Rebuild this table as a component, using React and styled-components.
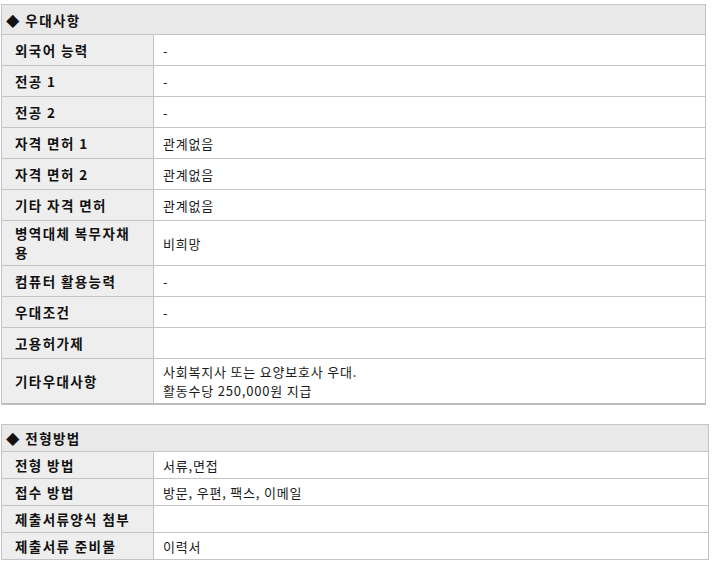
import React from "react";
import styled, { createGlobalStyle } from "styled-components";

const Global = createGlobalStyle`
  html, body { margin: 0; padding: 0; background: #fff; }
  body { font-family: "Noto Sans CJK KR", "Noto Sans", sans-serif; color: #222; }
`;

const Page = styled.div`
  padding: 4px 0 0 1px;
  display: flex;
  flex-direction: column;
  gap: 19px;
`;

const Section = styled.section`
  width: ${(p) => p.$width}px;
  box-sizing: border-box;
  border: 1px solid #c4c4c4;
  border-bottom: ${(p) => (p.$thick ? "2px solid #bcbcbc" : "none")};
`;

const Header = styled.div`
  height: ${(p) => p.$h}px;
  box-sizing: border-box;
  background: #e9e9e9;
  border-bottom: 1px solid #c4c4c4;
  display: flex;
  align-items: center;
  padding-left: 4px;
  font-size: 13.5px;
  font-weight: 700;
  letter-spacing: 1.4px;
  color: #111;
`;

const Row = styled.div`
  display: grid;
  grid-template-columns: 152px 1fr;
  min-height: ${(p) => p.$h}px;
  box-sizing: border-box;
  border-bottom: ${(p) => (p.$last ? "none" : "1px solid #c4c4c4")};
`;

const Label = styled.div`
  background: #eeeeee;
  border-right: 1px solid #c4c4c4;
  box-sizing: border-box;
  display: flex;
  align-items: center;
  padding: 3px 8px 3px 13px;
  font-size: 13.5px;
  font-weight: 700;
  letter-spacing: 1.4px;
  line-height: 19px;
  white-space: nowrap;
  color: #111;
`;

const Value = styled.div`
  display: flex;
  align-items: center;
  padding: 3px 9px;
  font-size: 13px;
  letter-spacing: 0.8px;
  line-height: 19px;
  color: #1a1a1a;
`;

const prefs = [
  ["외국어 능력", "-"],
  ["전공 1", "-"],
  ["전공 2", "-"],
  ["자격 면허 1", "관계없음"],
  ["자격 면허 2", "관계없음"],
  ["기타 자격 면허", "관계없음"],
  ["병역대체 복무자채\n용", "비희망"],
  ["컴퓨터 활용능력", "-"],
  ["우대조건", "-"],
  ["고용허가제", ""],
  ["기타우대사항", "사회복지사 또는 요양보호사 우대.\n활동수당 250,000원 지급"],
];

const methods = [
  ["전형 방법", "서류,면접"],
  ["접수 방법", "방문, 우편, 팩스, 이메일"],
  ["제출서류양식 첨부", ""],
  ["제출서류 준비물", "이력서"],
];

const MultiLine = ({ text }) => (
  <div>
    {text.split("\n").map((t, i, arr) => (
      <React.Fragment key={i}>
        {t}
        {i < arr.length - 1 && <br />}
      </React.Fragment>
    ))}
  </div>
);

export default function App() {
  return (
    <>
      <Global />
      <Page>
        <Section $width={705} $thick>
          <Header $h={30}>◆ 우대사항</Header>
          {prefs.map(([k, v], i) => (
            <Row key={k} $h={31} $last={i === prefs.length - 1}>
              <Label>
                <MultiLine text={k} />
              </Label>
              <Value>
                <MultiLine text={v} />
              </Value>
            </Row>
          ))}
        </Section>
        <Section $width={708}>
          <Header $h={27}>◆ 전형방법</Header>
          {methods.map(([k, v]) => (
            <Row key={k} $h={27}>
              <Label>{k}</Label>
              <Value>{v}</Value>
            </Row>
          ))}
        </Section>
      </Page>
    </>
  );
}
